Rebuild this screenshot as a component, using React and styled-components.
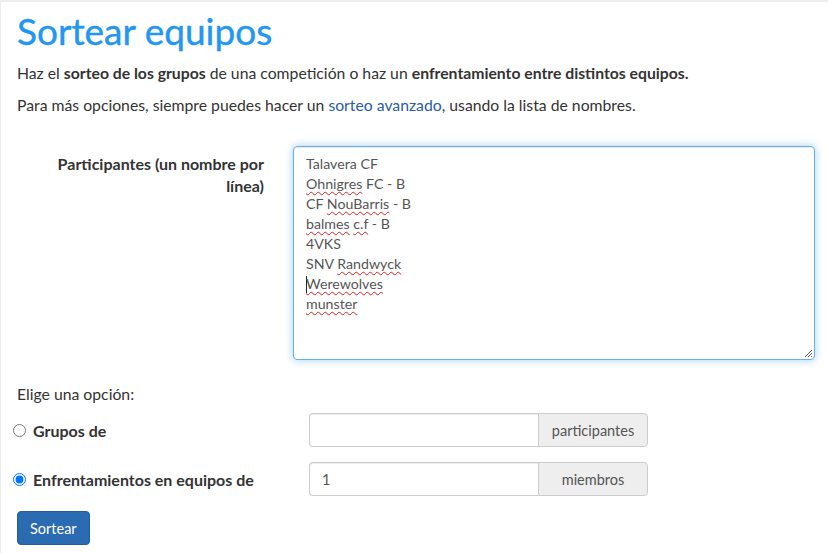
import React from "react";
import styled, { createGlobalStyle } from "styled-components";

const Global = createGlobalStyle`
  html, body { margin: 0; padding: 0; background: #fff; }
  body { font-family: Lato, "Open Sans", sans-serif; color: #333; }
  * { box-sizing: border-box; }
`;

const Page = styled.div`
  width: 828px;
  height: 553px;
  border-top: 2px solid #ececec;
  border-left: 1px solid #ececec;
  padding: 7px 13px 0 16px;
  overflow: hidden;
`;

const Title = styled.h1`
  margin: 0;
  font-size: 37px;
  font-weight: 400;
  color: #2196f3;
  line-height: 44px;
  -webkit-text-stroke: 0.4px #2196f3;
`;

const Lead = styled.p`
  margin: ${(p) => p.$mt || 0}px 0 0;
  font-size: 15.75px;
  line-height: 22px;
  color: #333;
  b { font-weight: 700; }
`;

const Link = styled.a`
  color: #2a5ca8;
  text-decoration: none;
`;

const FormRow = styled.div`
  display: flex;
  margin-top: 30px;
`;

const LabelCol = styled.div`
  width: 247px;
  padding-top: 7px;
  text-align: right;
  font-weight: 700;
  font-size: 16px;
  line-height: 22px;
  color: #333;
`;

const FieldCol = styled.div`
  margin-left: 29px;
  flex: 1;
`;

const TextBox = styled.div`
  position: relative;
  height: 214px;
  border: 1px solid #66afe9;
  border-radius: 4px;
  box-shadow: inset 0 1px 1px rgba(0,0,0,.075), 0 0 8px rgba(102,175,233,.6);
  padding: 7px 12px;
  font-size: 14.2px;
  line-height: 20px;
  color: #555;
`;

const Line = styled.div`
  height: 20px;
  white-space: nowrap;
`;

const Miss = styled.span`
  text-decoration: underline wavy #e02020;
  text-decoration-thickness: 1px;
  text-underline-offset: 2px;
  text-decoration-skip-ink: none;
`;

const Caret = styled.span`
  display: inline-block;
  width: 1px;
  height: 17px;
  background: #222;
  vertical-align: -4px;
  margin-right: -1px;
`;

const Grip = styled.svg`
  position: absolute;
  right: 1px;
  bottom: 1px;
`;

const Choose = styled.div`
  margin-top: 23px;
  font-size: 15.75px;
  line-height: 22px;
  color: #333;
`;

const OptionRow = styled.div`
  display: flex;
  align-items: center;
  margin-top: ${(p) => p.$mt}px;
`;

const RadioLabel = styled.label`
  width: 296px;
  display: flex;
  align-items: center;
  font-weight: 700;
  font-size: 16px;
  color: #333;
  margin-left: -4px;
`;

const Radio = styled.input`
  margin: 0 7px 0 0;
  width: 13px;
  height: 13px;
`;

const InputGroup = styled.div`
  display: flex;
  width: 339px;
  height: 34px;
`;

const TextInput = styled.div`
  flex: 1;
  border: 1px solid #ccc;
  border-right: 0;
  border-radius: 4px 0 0 4px;
  padding: 0 12px;
  display: flex;
  align-items: center;
  font-size: 14.5px;
  color: #555;
  box-shadow: inset 0 1px 1px rgba(0,0,0,.075);
`;

const Addon = styled.div`
  width: 110px;
  border: 1px solid #ccc;
  border-radius: 0 4px 4px 0;
  background: #eee;
  display: flex;
  align-items: center;
  justify-content: center;
  font-size: 14.5px;
  color: #555;
`;

const Button = styled.button`
  margin-top: 15px;
  height: 34px;
  padding: 0 12px;
  font-family: Lato, sans-serif;
  font-size: 14.5px;
  color: #fff;
  background: #2b6bb2;
  border: 1px solid #245d9c;
  border-radius: 4px;
`;

export default function App() {
  return (
    <>
      <Global />
      <Page>
        <Title>Sortear equipos</Title>
        <Lead $mt={9}>
          Haz el <b>sorteo de los grupos</b> de una competición o haz un{" "}
          <b>enfrentamiento entre distintos equipos.</b>
        </Lead>
        <Lead $mt={10}>
          Para más opciones, siempre puedes hacer un <Link>sorteo avanzado</Link>, usando la lista de nombres.
        </Lead>
        <FormRow>
          <LabelCol>
            Participantes (un nombre por
            <br />
            línea)
          </LabelCol>
          <FieldCol>
            <TextBox>
              <Line>Talavera CF</Line>
              <Line><Miss>Ohnigres</Miss> FC - B</Line>
              <Line>CF <Miss>NouBarris</Miss> - B</Line>
              <Line><Miss>balmes</Miss> <Miss>c.f</Miss> - B</Line>
              <Line>4VKS</Line>
              <Line>SNV <Miss>Randwyck</Miss></Line>
              <Line><Caret /><Miss>Werewolves</Miss></Line>
              <Line><Miss>munster</Miss></Line>
              <Grip width="10" height="10" viewBox="0 0 10 10">
                <path d="M9 2 L2 9 M9 5 L5 9 M9 8 L8 9" stroke="#555" strokeWidth="1" />
              </Grip>
            </TextBox>
          </FieldCol>
        </FormRow>
        <Choose>Elige una opción:</Choose>
        <OptionRow $mt={8}>
          <RadioLabel>
            <Radio type="radio" name="opt" />
            Grupos de
          </RadioLabel>
          <InputGroup>
            <TextInput />
            <Addon>participantes</Addon>
          </InputGroup>
        </OptionRow>
        <OptionRow $mt={15}>
          <RadioLabel>
            <Radio type="radio" name="opt" defaultChecked />
            Enfrentamientos en equipos de
          </RadioLabel>
          <InputGroup>
            <TextInput>1</TextInput>
            <Addon>miembros</Addon>
          </InputGroup>
        </OptionRow>
        <Button>Sortear</Button>
      </Page>
    </>
  );
}
